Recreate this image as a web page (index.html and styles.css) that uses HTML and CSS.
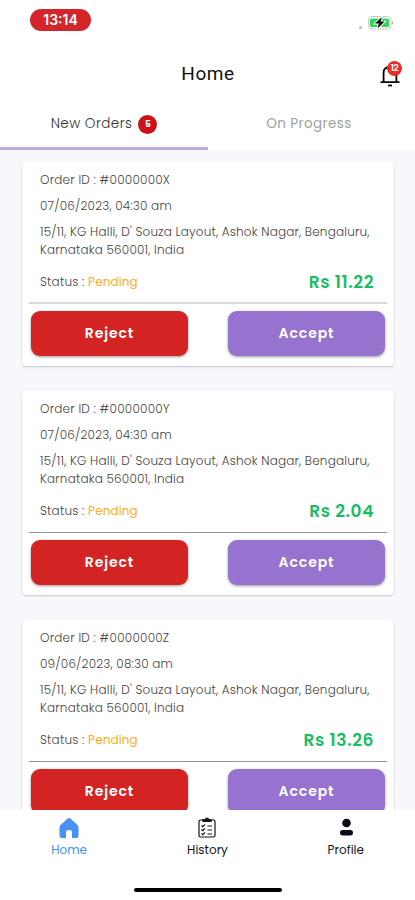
FILE: index.html
```html
<!DOCTYPE html>
<html lang="en">
<head>
<meta charset="utf-8">
<meta name="viewport" content="width=device-width, initial-scale=1">
<title>Home</title>
<link rel="stylesheet" href="styles.css">
</head>
<body>
<div class="app">
  <div class="statusbar">
    <span class="clock">13:14</span>
    <span class="power"><i class="dot"></i>
      <svg width="26" height="14" viewBox="0 0 26 14"><rect x=".5" y=".5" width="22.500" height="12.500" rx="3.500" fill="#fff" stroke="#c2c6c2"/><rect x="2" y="2.500" width="19" height="8.500" rx="1.500" fill="#32d25c"/><path d="M24 4.500q2 2.200 0 4.500z" fill="#aaa"/><path d="M13.800 1 6.800 7.600h4L9.500 12.600l7.200-7h-4z" fill="#111" stroke="#fff" stroke-width="1.800" paint-order="stroke"/></svg>
    </span>
  </div>
  <header class="header">
    <h1>Home</h1>
    <div class="bell">
      <svg width="20" height="22" viewBox="0 0 20 22" fill="none" stroke="#080808" stroke-width="1.800"><path d="M3.600 17V7.500Q3.600 2 10 2t6.400 5.500V17M.5 17.200h19"/><path d="M8 20.500h4"/></svg>
      <span class="bell-count">12</span>
    </div>
  </header>
  <nav class="tabs">
    <div class="tab active"><span class="tab-new">New Orders</span><span class="count">5</span></div>
    <div class="tab"><span class="tab-progress">On Progress</span></div>
  </nav>
  <main class="orders">
    <article class="card">
      <p class="id">Order ID : #0000000X</p>
      <p class="date">07/06/2023, 04:30 am</p>
      <p class="address">15/11, KG Halli, D' Souza Layout, Ashok Nagar, Bengaluru,<br><span class="city">Karnataka 560001, India</span></p>
      <div class="summary"><span class="status">Status : <b>Pending</b></span><strong>Rs 11.22</strong></div>
      <div class="actions soft"><button class="reject">Reject</button><button class="accept">Accept</button></div>
    </article>
    <article class="card">
      <p class="id">Order ID : #0000000Y</p>
      <p class="date">07/06/2023, 04:30 am</p>
      <p class="address">15/11, KG Halli, D' Souza Layout, Ashok Nagar, Bengaluru,<br><span class="city">Karnataka 560001, India</span></p>
      <div class="summary"><span class="status">Status : <b>Pending</b></span><strong>Rs 2.04</strong></div>
      <div class="actions"><button class="reject">Reject</button><button class="accept">Accept</button></div>
    </article>
    <article class="card">
      <p class="id">Order ID : #0000000Z</p>
      <p class="date">09/06/2023, 08:30 am</p>
      <p class="address">15/11, KG Halli, D' Souza Layout, Ashok Nagar, Bengaluru,<br><span class="city">Karnataka 560001, India</span></p>
      <div class="summary"><span class="status">Status : <b>Pending</b></span><strong>Rs 13.26</strong></div>
      <div class="actions"><button class="reject">Reject</button><button class="accept">Accept</button></div>
    </article>
  </main>
  <footer class="bottom">
    <nav class="menu">
      <a class="current"><svg width="20" height="22" viewBox="0 0 20 22"><path d="M8.400 1.800Q10 .3 11.600 1.800L18.200 7.800Q19.500 9 19.500 10.800V18.500Q19.500 21 17 21H13V15Q13 13 10 13t-3 2v6H3Q.5 21 .5 18.500V10.800Q.5 9 1.800 7.800z" fill="#4793f5"/></svg><span>Home</span></a>
      <a><svg width="20" height="22" viewBox="0 0 20 22" fill="none" stroke="#151515" stroke-width="1.200"><path d="M6 3H3.500Q2 3 2 4.500v14Q2 20 3.500 20h13q1.500 0 1.500-1.500v-14Q18 3 16.500 3H14"/><path d="M6 4.500V2.500h2Q10-.5 12 2.500h2v2z" fill="#151515"/><path d="m4.500 8.500 1.300 1.200L8 7.500M10.500 9H15M4.500 12.500l1.300 1.200L8 11.500M10.500 13H15M4.500 16.500l1.300 1.200L8 15.500M10.500 17H15"/></svg><span class="history">History</span></a>
      <a><svg width="20" height="22" viewBox="0 0 20 22" fill="#090919"><circle cx="10.500" cy="6" r="4.300"/><rect x="4" y="13" width="13" height="5.500" rx="2.750"/></svg><span>Profile</span></a>
    </nav>
    <div class="home-bar"></div>
  </footer>
</div>
</body>
</html>
```
FILE: styles.css
```css
* { box-sizing: border-box; }
body { margin: 0; background: #fff; color: #1c1c1c; font-family: Poppins, Inter, sans-serif; }
h1, p { margin: 0; font-weight: 400; }
.app { width: 415px; height: 900px; display: flex; flex-direction: column; overflow: hidden; }
.statusbar { height: 50px; flex: none; display: flex; justify-content: space-between; align-items: flex-start; padding: 9px 20px 0 30px; }
.clock { width: 61px; height: 22px; border-radius: 11px; background: #d2262b; color: #fff; font: 600 14px/22px Inter, sans-serif; text-align: center; }
.power { display: flex; align-items: center; gap: 6px; padding-top: 7px; margin-right: 1px; }
.dot { width: 3px; height: 3px; margin-top: 8px; border-radius: 50%; background: #bbb; }
.power svg { display: block; }
.header { height: 50px; flex: none; position: relative; display: flex; justify-content: center; }
h1 { font: 400 19px/48px Roboto, sans-serif; letter-spacing: .6px; color: #111; padding-left: 1px; }
.bell { position: absolute; left: 380px; top: 15px; width: 24px; height: 24px; }
.bell svg { display: block; }
.bell-count { position: absolute; left: 7px; top: -4px; width: 15px; height: 15px; border-radius: 50%; background: #e92c24; color: #fff; font-size: 9px; line-height: 15px; font-weight: 600; letter-spacing: -.5px; text-align: center; }
.tabs { height: 50px; flex: none; display: grid; grid-template-columns: 208px 207px; }
.tab { display: flex; align-items: center; justify-content: center; gap: 6px; padding-top: 1px; border-bottom: 3px solid transparent; color: #a0a0a0; font-size: 13.500px; font-weight: 300; }
.active { border-color: #bda9da; color: #333; }
.tab-new { letter-spacing: .45px; }
.tab-progress { font-weight: 400; letter-spacing: .4px; padding-right: 5px; }
.count { width: 19px; height: 19px; border-radius: 50%; background: #cc1118; color: #fff; font-size: 9px; line-height: 19px; font-weight: 700; text-align: center; }
.orders { height: 660px; flex: none; overflow: hidden; background: #f8f7fc; padding: 12px 21px 0 22px; }
.card { height: 204px; margin-bottom: 25px; padding: 9px 7px 0; background: #fff; border-radius: 4px; box-shadow: 0 1px 2px #0003; }
.card p, .status { color: #444; font-size: 12px; font-weight: 300; line-height: 18px; white-space: nowrap; }
.card p { margin: 0 11px 8px; }
.id, .status { letter-spacing: .23px; }
.date, .address { letter-spacing: .2px; }
.summary { height: 30px; display: flex; align-items: center; justify-content: space-between; margin-top: 0; padding: 0 12px 0 11px; }
.status b { color: #ffad16; font-weight: 400; letter-spacing: .1px; }
.summary strong { color: #18bd63; font-size: 17px; line-height: 24px; font-weight: 600; letter-spacing: .6px; margin-right: 1px; }
.actions { display: flex; justify-content: space-between; margin-top: 6px; padding: 7px 2px 0; border-top: 1px solid #969696; }
.soft { border-top: 2px solid #dadada; margin-top: 5px; }
button { width: 157px; height: 45px; padding: 0; border: 0; border-radius: 9px; box-shadow: 0 1px 3px #0006; color: #fff; font: 600 14px/45px Poppins, Inter, sans-serif; letter-spacing: .9px; }
.reject { background: #d42323; }
.accept { background: #9872cf; }
.bottom { flex: 1; background: #fff; display: flex; flex-direction: column; align-items: center; }
.menu { width: 415px; height: 78px; display: grid; grid-template-columns: repeat(3, 138.330px); padding-top: 7px; }
.menu a { display: flex; flex-direction: column; align-items: center; color: #151515; font-size: 12px; line-height: 20px; font-weight: 400; }
.menu svg { display: block; margin-bottom: 1px; }
.menu .current { color: #4793f5; }
.home-bar { width: 148px; height: 4px; border-radius: 2px; background: #000; }
```
